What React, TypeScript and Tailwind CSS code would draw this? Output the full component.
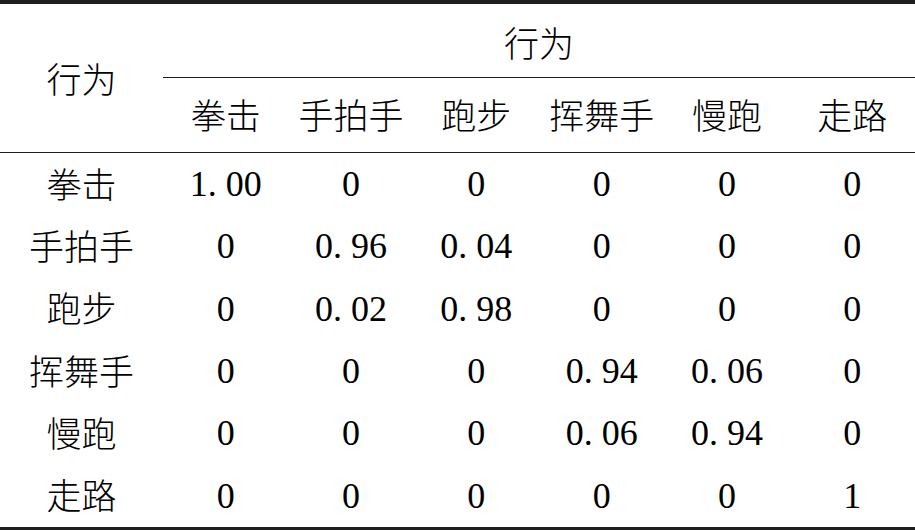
import React from 'react';

const cols = ['拳击', '手拍手', '跑步', '挥舞手', '慢跑', '走路'];

const rows: [string, string[]][] = [
  ['拳击', ['1.00', '0', '0', '0', '0', '0']],
  ['手拍手', ['0', '0.96', '0.04', '0', '0', '0']],
  ['跑步', ['0', '0.02', '0.98', '0', '0', '0']],
  ['挥舞手', ['0', '0', '0', '0.94', '0.06', '0']],
  ['慢跑', ['0', '0', '0', '0.06', '0.94', '0']],
  ['走路', ['0', '0', '0', '0', '0', '1']],
];

const cjk = "font-['Noto_Sans_CJK_SC',sans-serif] font-light text-[35px] leading-none text-black";
const num = "font-['Liberation_Serif',serif] text-[36px] leading-none text-black";

function Num({ value }: { value: string }) {
  const dot = value.indexOf('.');
  if (dot < 0) return <span className={num}>{value}</span>;
  return (
    <span className={num}>
      {value.slice(0, dot)}
      <span className="inline-block w-[18px] text-left">.</span>
      {value.slice(dot + 1)}
    </span>
  );
}

export default function App() {
  return (
    <div className="w-[915px] h-[530px] bg-white overflow-hidden flex flex-col">
      <div className="h-[4px] bg-[#1e1e1e]" />
      <div className="flex h-[148px]">
        <div className="w-[163px] flex items-center justify-center pb-[2px]">
          <span className={cjk}>行为</span>
        </div>
        <div className="flex-1 flex flex-col">
          <div className="h-[73px] flex items-center justify-center pt-[1px]">
            <span className={cjk}>行为</span>
          </div>
          <div className="h-px bg-[#1e1e1e]" />
          <div className="flex-1 grid grid-cols-6 items-center">
            {cols.map((c) => (
              <div key={c} className="text-center">
                <span className={cjk}>{c}</span>
              </div>
            ))}
          </div>
        </div>
      </div>
      <div className="h-px bg-[#1e1e1e]" />
      <div className="flex-1 flex flex-col">
        {rows.map(([label, vals]) => (
          <div key={label} className="flex-1 grid grid-cols-[163px_repeat(6,1fr)] items-center">
            <div className="text-center">
              <span className={cjk}>{label}</span>
            </div>
            {vals.map((v, i) => (
              <div key={i} className="text-center">
                <Num value={v} />
              </div>
            ))}
          </div>
        ))}
      </div>
      <div className="h-[3px] bg-[#1e1e1e]" />
    </div>
  );
}
